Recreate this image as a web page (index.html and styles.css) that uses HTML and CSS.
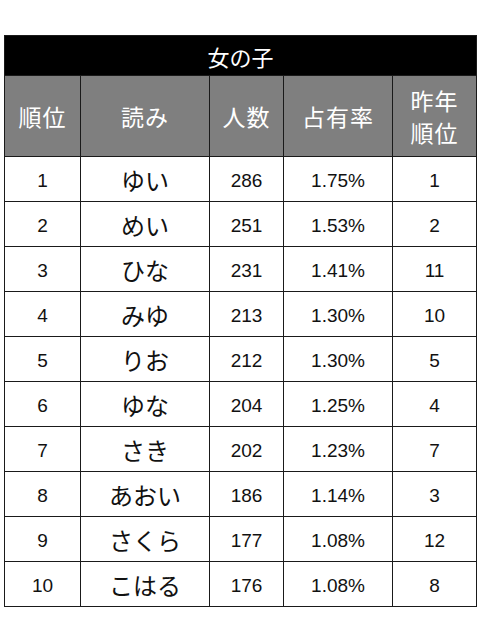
FILE: index.html
```html
<!DOCTYPE html>
<html lang="ja">
<head>
<meta charset="utf-8">
<link rel="stylesheet" href="styles.css">
</head>
<body>
<table class="rank">
  <colgroup>
    <col class="c1"><col class="c2"><col class="c3"><col class="c4"><col class="c5">
  </colgroup>
  <thead>
    <tr class="title"><th colspan="5">女の子</th></tr>
    <tr class="head">
      <th>順位</th><th>読み</th><th>人数</th><th>占有率</th><th>昨年<br>順位</th>
    </tr>
  </thead>
  <tbody>
    <tr><td>1</td><td class="kana">ゆい</td><td>286</td><td>1.75%</td><td>1</td></tr>
    <tr><td>2</td><td class="kana">めい</td><td>251</td><td>1.53%</td><td>2</td></tr>
    <tr><td>3</td><td class="kana">ひな</td><td>231</td><td>1.41%</td><td>11</td></tr>
    <tr><td>4</td><td class="kana">みゆ</td><td>213</td><td>1.30%</td><td>10</td></tr>
    <tr><td>5</td><td class="kana">りお</td><td>212</td><td>1.30%</td><td>5</td></tr>
    <tr><td>6</td><td class="kana">ゆな</td><td>204</td><td>1.25%</td><td>4</td></tr>
    <tr><td>7</td><td class="kana">さき</td><td>202</td><td>1.23%</td><td>7</td></tr>
    <tr><td>8</td><td class="kana">あおい</td><td>186</td><td>1.14%</td><td>3</td></tr>
    <tr><td>9</td><td class="kana">さくら</td><td>177</td><td>1.08%</td><td>12</td></tr>
    <tr><td>10</td><td class="kana">こはる</td><td>176</td><td>1.08%</td><td>8</td></tr>
  </tbody>
</table>
</body>
</html>
```
FILE: styles.css
```css
html, body {
  margin: 0;
  padding: 0;
  background: #ffffff;
}
body {
  padding: 35px 0 0 4px;
  font-family: "Liberation Sans", "Noto Sans CJK JP", sans-serif;
  color: #111;
}
.rank {
  border-collapse: collapse;
  table-layout: fixed;
  width: 472px;
}
.c1 { width: 76px; }
.c2 { width: 129px; }
.c3 { width: 74px; }
.c4 { width: 109px; }
.c5 { width: 84px; }
.rank th, .rank td {
  border: 1px solid #1a1a1a;
  text-align: center;
  vertical-align: middle;
  padding: 0;
}
.title th {
  background: #000;
  color: #fff;
  height: 39px;
  font-family: "Noto Sans CJK JP", sans-serif;
  font-weight: 400;
  font-size: 22px;
}
.head th {
  background: #7f7f7f;
  color: #fff;
  height: 80px;
  font-family: "Noto Sans CJK JP", sans-serif;
  font-weight: 400;
  font-size: 23px;
  line-height: 32px;
  letter-spacing: 1px;
}
.rank td {
  height: 40px;
  font-size: 19px;
  padding-top: 4px;
}
.rank td.kana {
  height: 44px;
  font-family: "Noto Sans CJK JP", sans-serif;
  font-size: 24px;
  padding-top: 0;
}
```
